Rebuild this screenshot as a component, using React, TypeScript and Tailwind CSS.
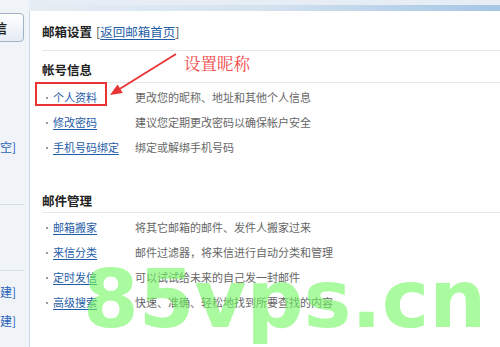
import React from 'react';

const cjk = { fontFamily: '"Noto Sans CJK SC", "Liberation Sans", sans-serif' };

type Item = { name: string; desc: string };

const accountItems: Item[] = [
  { name: '个人资料', desc: '更改您的昵称、地址和其他个人信息' },
  { name: '修改密码', desc: '建议您定期更改密码以确保帐户安全' },
  { name: '手机号码绑定', desc: '绑定或解绑手机号码' },
];

const mailItems: Item[] = [
  { name: '邮箱搬家', desc: '将其它邮箱的邮件、发件人搬家过来' },
  { name: '来信分类', desc: '邮件过滤器，将来信进行自动分类和管理' },
  { name: '定时发信', desc: '可以试试给未来的自己发一封邮件' },
  { name: '高级搜索', desc: '快速、准确、轻松地找到所要查找的内容' },
];

const Row: React.FC<{ item: Item }> = ({ item }) => (
  <div className="grid grid-cols-[93px_1fr] h-[25px] items-center text-[11px]">
    <div className="flex items-center pl-[4px]">
      <span className="w-[2px] h-[2px] bg-[#9a9a9a] mt-[1px]" />
      <a className="ml-[5px] text-[#1f5da6] underline underline-offset-2 whitespace-nowrap">{item.name}</a>
    </div>
    <span className="text-[#666] whitespace-nowrap">{item.desc}</span>
  </div>
);

const SideLink: React.FC<{ text: string }> = ({ text }) => (
  <div className="flex justify-end w-[16px] h-[20px] items-center text-[12px] text-[#2a62b8] whitespace-nowrap">
    {text}
  </div>
);

export default function App() {
  return (
    <div className="relative w-[500px] h-[347px] overflow-hidden bg-[#e6edf4] flex" style={cjk}>
      {/* Sidebar */}
      <div className="w-[29px] shrink-0 overflow-hidden bg-[#f0f4f8] flex flex-col">
        <div className="mt-[13px] ml-[-30px] w-[54px] h-[29px] rounded-[4px] border border-[#9fb2c6] bg-gradient-to-b from-white to-[#e4ebf3] flex items-center justify-end pr-[16px] text-[13px] font-bold text-[#222] whitespace-nowrap">
          写信
        </div>
        <div className="mt-[95px]">
          <SideLink text="[清空]" />
        </div>
        <div className="mt-[47px] w-[24px] border-t border-[#d6dfe8]" />
        <div className="mt-[65px] w-[24px] border-t border-[#d6dfe8]" />
        <div className="mt-[11px]">
          <SideLink text="[新建]" />
        </div>
        <div className="mt-[9px]">
          <SideLink text="[新建]" />
        </div>
      </div>

      {/* Main panel */}
      <div className="flex-1 flex flex-col">
        <div className="h-[5px]" />
        <div className="h-[6px] bg-gradient-to-r from-[#e6edf4] via-[#d4e2ef] to-[#a5c6e5]" />
        <div className="flex-1 bg-white border-l border-[#c9d9e9]">
          {/* Header */}
          <div className="ml-[12px] pt-[11px] pb-[8px] border-b border-[#e3e8ea]">
            <div className="h-[20px] flex items-center text-[12.5px]">
              <span className="font-bold text-[#222]">邮箱设置</span>
              <span className="ml-[4px] text-[#555]">[</span>
              <a className="text-[#1f5da6] underline underline-offset-2">返回邮箱首页</a>
              <span className="text-[#555]">]</span>
            </div>
          </div>

          {/* Account */}
          <div className="ml-[12px] mt-[9px] pb-[2px] border-b border-[#e3e8ea]">
            <div className="h-[20px] flex items-center text-[12.5px] font-bold text-[#222]">帐号信息</div>
          </div>
          <div className="ml-[12px] mt-[2px]">
            {accountItems.map((it) => (
              <Row key={it.name} item={it} />
            ))}
          </div>

          {/* Mail */}
          <div className="ml-[12px] mt-[31px] pb-[1px] border-b border-[#e3e8ea]">
            <div className="h-[20px] flex items-center text-[12.5px] font-bold text-[#222]">邮件管理</div>
          </div>
          <div className="ml-[12px] mt-[2px]">
            {mailItems.map((it) => (
              <Row key={it.name} item={it} />
            ))}
          </div>
        </div>
      </div>

      {/* Annotation */}
      <div className="absolute left-[35px] top-[82px] w-[72px] h-[24px] border-2 border-[#e83434]" />
      <svg className="absolute left-0 top-0" width="500" height="347" viewBox="0 0 500 347">
        <line x1="176" y1="54" x2="120" y2="88.7" stroke="#e83434" strokeWidth="1.8" />
        <polygon points="110,95 122.8,93 117.6,84.4" fill="#e83434" />
      </svg>
      <div
        className="absolute left-[184px] top-[52px] text-[16.5px] leading-[22px] text-[#f04a4a] whitespace-nowrap"
        style={{ fontFamily: '"Noto Serif CJK SC", "Noto Sans CJK SC", serif' }}
      >
        设置昵称
      </div>

      {/* Watermark */}
      <div
        className="absolute left-[83px] top-[260px] text-[80px] leading-none font-bold whitespace-nowrap pointer-events-none"
        style={{ fontFamily: '"DejaVu Sans", sans-serif', color: 'rgba(114,247,97,0.6)' }}
      >
        85vps.cn
      </div>
    </div>
  );
}
